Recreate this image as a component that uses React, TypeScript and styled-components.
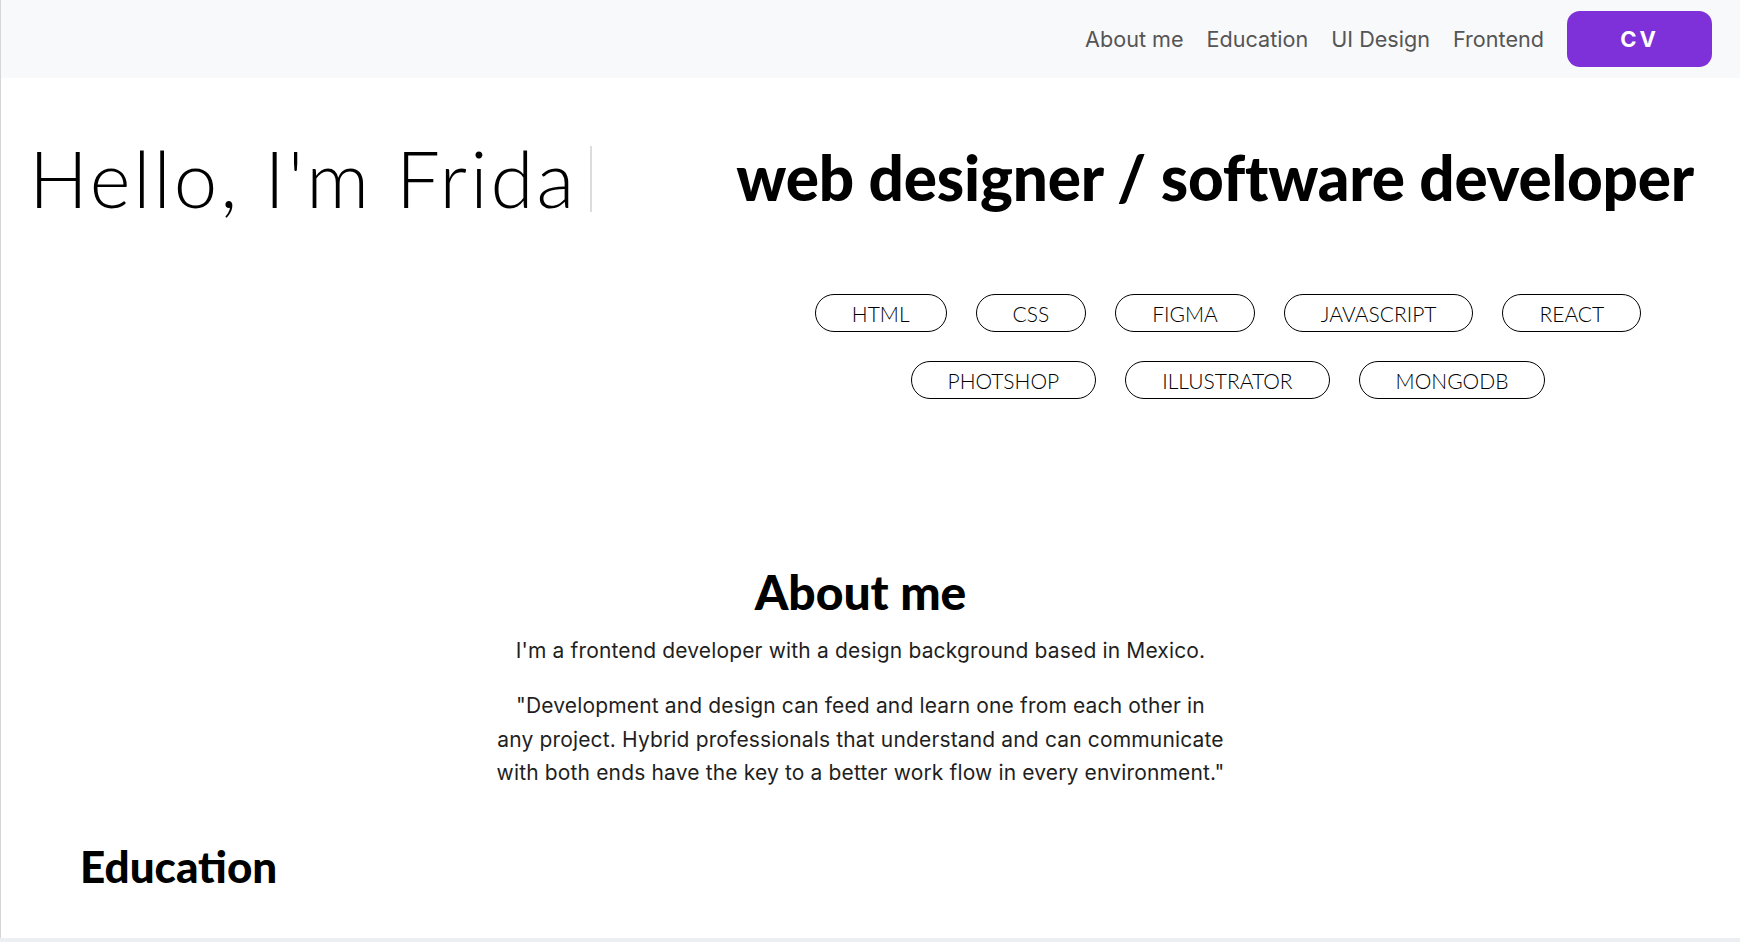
import React, { FC } from 'react';
import styled, { createGlobalStyle } from 'styled-components';

const colours = {
  nav: '#f8f9fb',
  link: '#555555',
  purple: '#7e30d9',
  text: '#1f1f1f',
  frame: '#eceef1',
};

const GlobalStyle = createGlobalStyle`
  html, body {
    margin: 0;
    padding: 0;
    background: ${colours.frame};
  }
  * {
    box-sizing: border-box;
  }
`;

const Page = styled.div`
  height: 938px;
  overflow: hidden;
  background: #ffffff;
  border-left: 1px solid #d6d6d6;
  font-family: Inter, 'Liberation Sans', sans-serif;
  color: #000;
`;

const NavBar = styled.nav`
  height: 78px;
  background: ${colours.nav};
  display: flex;
  align-items: center;
  justify-content: flex-end;
  padding-right: 28px;
  gap: 23px;
`;

const NavLink = styled.a`
  font-family: Inter, 'Liberation Sans', sans-serif;
  font-size: 21.6px;
  color: ${colours.link};
  text-decoration: none;
`;

const CvButton = styled.button`
  width: 145px;
  height: 56px;
  border: none;
  border-radius: 13px;
  background: ${colours.purple};
  color: #fff;
  font-family: Inter, 'Liberation Sans', sans-serif;
  font-weight: 700;
  font-size: 22px;
  letter-spacing: 3px;
`;

const Hero = styled.section`
  display: flex;
  align-items: flex-start;
  justify-content: space-between;
  padding-top: 54px;
`;

const Greeting = styled.h1`
  margin: 0;
  padding-left: 28px;
  display: flex;
  align-items: center;
  font-family: Lato, sans-serif;
  font-weight: 300;
  font-size: 78px;
  line-height: 1.2;
  letter-spacing: 3px;
`;

const Cursor = styled.span`
  display: inline-block;
  width: 2px;
  height: 66px;
  margin-left: 13px;
  background: #dcdcdc;
`;

const RoleBlock = styled.div`
  width: 1024px;
  display: flex;
  flex-direction: column;
`;

const Role = styled.h2`
  margin: 0;
  padding-right: 46px;
  padding-top: 8px;
  text-align: right;
  font-family: Lato, sans-serif;
  font-weight: 900;
  font-size: 62px;
  line-height: 1.2;
  letter-spacing: -0.2px;
`;

const SkillList = styled.ul`
  list-style: none;
  margin: 80px auto 0;
  padding: 0;
  max-width: 960px;
  display: flex;
  flex-wrap: wrap;
  justify-content: center;
  gap: 29px;
`;

const Skill = styled.li`
  height: 38px;
  padding: 0 36px;
  display: flex;
  align-items: center;
  border: 1.5px solid #000;
  border-radius: 19px;
  font-family: Lato, sans-serif;
  font-weight: 300;
  font-size: 21px;
  text-transform: uppercase;
`;

const About = styled.section`
  margin-top: 164px;
  padding-right: 20px;
  display: flex;
  flex-direction: column;
  align-items: center;
  text-align: center;
`;

interface HeadingProps {
  size: number;
}

const SectionTitle = styled.h2<HeadingProps>`
  margin: 0;
  font-family: Lato, sans-serif;
  font-weight: 900;
  font-size: ${(p) => p.size}px;
  line-height: 1.2;
`;

const Paragraph = styled.p`
  margin: 0;
  font-size: 21px;
  letter-spacing: 0.15px;
  line-height: 33.5px;
  color: ${colours.text};

  & + & {
    margin-top: 22px;
  }
`;

const Lead = styled(Paragraph)`
  margin-top: 13px;
`;

const Education = styled.section`
  margin-top: 50px;
  padding-left: 79px;
`;

const skills = ['HTML', 'CSS', 'Figma', 'JavaScript', 'React', 'Photshop', 'Illustrator', 'MongoDB'];

const App: FC = () => {
  return (
    <>
      <GlobalStyle />
      <Page>
        <NavBar>
          <NavLink href="#about">About me</NavLink>
          <NavLink href="#education">Education</NavLink>
          <NavLink href="#ui">UI Design</NavLink>
          <NavLink href="#frontend">Frontend</NavLink>
          <CvButton>CV</CvButton>
        </NavBar>

        <Hero>
          <Greeting>
            Hello, I'm Frida
            <Cursor />
          </Greeting>
          <RoleBlock>
            <Role>web designer / software developer</Role>
            <SkillList>
              {skills.map((s) => (
                <Skill key={s}>{s}</Skill>
              ))}
            </SkillList>
          </RoleBlock>
        </Hero>

        <About id="about">
          <SectionTitle size={48}>About me</SectionTitle>
          <Lead>I'm a frontend developer with a design background based in Mexico.</Lead>
          <Paragraph>
            "Development and design can feed and learn one from each other in
            <br />
            any project. Hybrid professionals that understand and can communicate
            <br />
            with both ends have the key to a better work flow in every environment."
          </Paragraph>
        </About>

        <Education id="education">
          <SectionTitle size={44}>Education</SectionTitle>
        </Education>
      </Page>
    </>
  );
};

export default App;
